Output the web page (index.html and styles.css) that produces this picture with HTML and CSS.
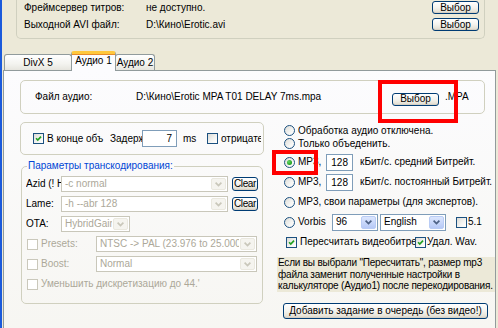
FILE: index.html
```html
<!DOCTYPE html>
<html lang="ru">
<head>
<meta charset="utf-8">
<title>Аудио 1</title>
<link rel="stylesheet" href="styles.css">
</head>
<body>
<div class="window">
  <div class="topgroup">
    <div class="trow"><span class="tlabel">Фреймсервер титров:</span><span class="tval">не доступно.</span><button class="btn btn-choose">Выбор</button></div>
    <div class="trow"><span class="tlabel">Выходной AVI файл:</span><span class="tval">D:\Кино\Erotic.avi</span><button class="btn btn-choose">Выбор</button></div>
  </div>
  <div class="tabs">
    <div class="tab tab-divx">DivX 5</div>
    <div class="tab tab-a1 active">Аудио 1</div>
    <div class="tab tab-a2">Аудио 2</div>
  </div>
  <div class="panel">
    <div class="box filebox">
      <span class="flabel">Файл аудио:</span>
      <span class="fpath">D:\Кино\Erotic MPA T01 DELAY 7ms.mpa</span>
      <button class="btn btn-choose btn-file">Выбор</button>
      <span class="fext">.MPA</span>
    </div>
    <div class="cols">
      <div class="left">
        <div class="box delaybox">
          <span class="cb checked"><svg viewBox="0 0 11 11"><path d="M2.5 5.2 L4.6 7.3 L8.6 3.2" /></svg></span>
          <span class="clip w-end">В конце объ</span>
          <span class="clip w-delay">Задерж</span>
          <span class="input w-ms">7</span>
          <span class="ms">ms</span>
          <span class="cb"></span>
          <span class="clip w-neg">отрицате</span>
        </div>
        <fieldset class="box transcode">
          <legend>Параметры транскодирования:</legend>
          <div class="frow">
            <span class="clip w-flabel">Azid (! H</span>
            <div class="combo disabled w-long"><span class="ctext">-c normal</span><span class="cbtn"><svg viewBox="0 0 7 5"><path d="M0.6 0.6 L3.5 3.6 L6.4 0.6"/></svg></span></div>
            <button class="btn btn-clear">Clear</button>
          </div>
          <div class="frow">
            <span class="clip w-flabel">Lame:</span>
            <div class="combo disabled w-long"><span class="ctext">-h --abr 128</span><span class="cbtn"><svg viewBox="0 0 7 5"><path d="M0.6 0.6 L3.5 3.6 L6.4 0.6"/></svg></span></div>
            <button class="btn btn-clear">Clear</button>
          </div>
          <div class="frow">
            <span class="clip w-flabel">OTA:</span>
            <div class="combo disabled w-ota"><span class="ctext">HybridGain</span><span class="cbtn"><svg viewBox="0 0 7 5"><path d="M0.6 0.6 L3.5 3.6 L6.4 0.6"/></svg></span></div>
          </div>
          <div class="frow">
            <span class="cb disabled cb-f"></span>
            <span class="dis w-plabel">Presets:</span>
            <div class="combo disabled w-preset"><span class="ctext">NTSC -&gt; PAL (23.976 to 25.000)</span><span class="cbtn"><svg viewBox="0 0 7 5"><path d="M0.6 0.6 L3.5 3.6 L6.4 0.6"/></svg></span></div>
          </div>
          <div class="frow">
            <span class="cb disabled cb-f"></span>
            <span class="dis w-plabel">Boost:</span>
            <div class="combo disabled w-preset"><span class="ctext">Normal</span><span class="cbtn"><svg viewBox="0 0 7 5"><path d="M0.6 0.6 L3.5 3.6 L6.4 0.6"/></svg></span></div>
          </div>
          <div class="frow frow-last">
            <span class="cb disabled cb-f"></span>
            <span class="dis">Уменьшить дискретизацию до 44.'</span>
          </div>
        </fieldset>
      </div>
      <div class="right">
        <div class="rrow rrow-s"><span class="rb"></span><span class="rtext">Обработка аудио отключена.</span></div>
        <div class="rrow rrow-s"><span class="rb"></span><span class="rtext">Только объеденить.</span></div>
        <div class="rrow rrow-first"><span class="rb on"></span><span class="rtext w-mp3">MP3,</span><span class="input w-kb">128</span><span class="rdesc">кБит/с. средний Битрейт.</span></div>
        <div class="rrow"><span class="rb"></span><span class="rtext w-mp3">MP3,</span><span class="input w-kb">128</span><span class="rdesc">кБит/с. постоянный Битрейт.</span></div>
        <div class="rrow"><span class="rb"></span><span class="rtext">MP3, свои параметры (для экспертов).</span></div>
        <div class="rrow">
          <span class="rb"></span><span class="rtext w-vorbis">Vorbis</span>
          <div class="combo w-96"><span class="ctext">96</span><span class="cbtn"><svg viewBox="0 0 7 5"><path d="M0.6 0.6 L3.5 3.6 L6.4 0.6"/></svg></span></div>
          <div class="combo w-lang"><span class="ctext">English</span><span class="cbtn"><svg viewBox="0 0 7 5"><path d="M0.6 0.6 L3.5 3.6 L6.4 0.6"/></svg></span></div>
          <span class="cb cb-51"></span><span class="t51">5.1</span>
        </div>
        <div class="rrow">
          <span class="cb checked cb-re"><svg viewBox="0 0 11 11"><path d="M2.5 5.2 L4.6 7.3 L8.6 3.2" /></svg></span>
          <span class="clip w-recalc">Пересчитать видеобитрей</span>
          <span class="cb checked"><svg viewBox="0 0 11 11"><path d="M2.5 5.2 L4.6 7.3 L8.6 3.2" /></svg></span>
          <span class="twav">Удал. Wav.</span>
        </div>
        <div class="note">Если вы выбрали "Пересчитать", размер mp3<br>файла заменит полученные настройки в<br>калькуляторе (Аудио1) после перекодирования.</div>
        <button class="btn btn-queue">Добавить задание в очередь (без видео!)</button>
      </div>
    </div>
  </div>
  <div class="mark mark1"></div>
  <div class="mark mark2"></div>
</div>
</body>
</html>
```

FILE: styles.css
```css
* { box-sizing: border-box; }
html, body { margin: 0; padding: 0; }
body { background: #ECE9D8; }

.window {
  position: relative;
  width: 498px;
  height: 328px;
  overflow: hidden;
  background: #ECE9D8;
  border-left: 2px solid #1B5ADB;
  font-family: "Liberation Sans", Arial, sans-serif;
  font-size: 10px;
  color: #000;
  line-height: 12px;
}

/* buttons */
.btn {
  font-family: inherit;
  font-size: 10px;
  line-height: 10px;
  color: #000;
  padding: 0;
  border: 1px solid #003C74;
  border-radius: 3px;
  background: linear-gradient(#FFFFFF 0%, #F4F3EE 50%, #E6E3D8 85%, #D6D0C5 100%);
  box-shadow: inset 0 -1px 0 #D6D0C5;
  text-align: center;
  flex: none;
  white-space: nowrap;
}
.btn-choose { width: 47px; height: 13px; margin-left: auto; }

/* top group */
.topgroup {
  margin-left: 14px;
  width: 469px;
  height: 39px;
  border: 1px solid #D0D0BF;
  border-top: 0;
  border-radius: 0 0 5px 5px;
  padding: 1px 5px 0 7px;
  display: flex;
  flex-direction: column;
  gap: 4px;
}
.trow { display: flex; align-items: center; height: 13px; }
.tlabel { width: 122px; flex: none; }
.tval { flex: none; }

/* tabs */
.tabs {
  display: flex;
  align-items: flex-end;
  height: 31px;
  margin-left: 2px;
  position: relative;
  z-index: 2;
}
.tab {
  height: 16px;
  border: 1px solid #919B9C;
  border-bottom: 0;
  border-radius: 3px 3px 0 0;
  background: linear-gradient(#FFFFFF, #F3F3EF 60%, #E6E5DE);
  text-align: center;
  line-height: 15px;
  flex: none;
}
.tab-divx { width: 68px; }
.tab-a1 { width: 45px; }
.tab-a2 { width: 40px; margin-left: -1px; }
.tab.active {
  height: 20px;
  margin-bottom: -1px;
  margin-left: -1px;
  background: #FCFCFE;
  border-top: 3px solid #FFC83C;
  box-shadow: inset 0 1px 0 #E68B2C;
  line-height: 13px;
  position: relative;
  z-index: 3;
}

/* panel */
.panel {
  margin-left: 1px;
  width: 493px;
  height: 300px;
  border: 1px solid #919B9C;
  background: linear-gradient(#FCFCFE, #F6F5F0);
  position: relative;
  z-index: 1;
}
.box {
  border: 1px solid #D0D0BF;
  border-radius: 5px;
}
.filebox {
  margin: 9px 0 0 16px;
  width: 465px;
  height: 34px;
  display: flex;
  align-items: center;
  padding-left: 14px;
}
.flabel { width: 101px; flex: none; }
.fpath { width: 256px; flex: none; white-space: nowrap; }
.btn-file { margin-left: 0; margin-top: 4px; }
.fext { margin-left: 6px; }

.cols { display: flex; margin: 8px 0 0 16px; }
.left { width: 244px; flex: none; }
.right { margin-left: 13px; width: 218px; flex: none; padding-top: 2px; }

.clip { white-space: nowrap; overflow: hidden; flex: none; }

/* delay box */
.delaybox {
  height: 33px;
  display: flex;
  align-items: center;
  padding-left: 12px;
  overflow: hidden;
}
.w-end { width: 60px; margin-left: 3px; }
.w-delay { width: 32px; margin-left: 3px; }
.w-ms { width: 35px; height: 17px; }
.ms { width: 24px; margin-left: 6px; flex: none; }
.w-neg { width: 40px; margin-left: 3px; }

.input {
  border: 1px solid #7F9DB9;
  background: #fff;
  text-align: right;
  padding-right: 4px;
  line-height: 15px;
  flex: none;
}

/* checkbox */
.cb {
  width: 11px;
  height: 11px;
  flex: none;
  border: 1px solid #1C5180;
  background: linear-gradient(135deg, #DCDCD7 0%, #F5F5F3 60%, #FFFFFF 100%);
  display: inline-flex;
}
.cb svg { width: 9px; height: 9px; }
.cb svg path { fill: none; stroke: #21A121; stroke-width: 2; }
.cb.disabled { border-color: #CAC8BB; background: #FFFFFF; }

/* transcode group */
.transcode {
  margin: 5px 0 0 1px;
  width: 242px;
  height: 144px;
  padding: 0 0 0 4px;
  min-width: 0;
}
.transcode legend {
  color: #0046D5;
  padding: 0 1px;
  margin-left: 1px;
  line-height: 12px;
}
.frow { display: flex; align-items: center; height: 16px; margin-top: 4px; }
.frow-last { margin-top: 6px; height: 12px; }
.w-flabel { width: 35px; color: #000; }
.btn-clear { width: 26px; height: 14px; margin-left: 4px; letter-spacing: -0.4px; overflow: visible; }
.cb-f { margin-left: 1px; }
.dis { color: #ACA899; white-space: nowrap; margin-left: 3px; }
.w-plabel { width: 55px; flex: none; }

/* combo */
.combo {
  height: 16px;
  border: 1px solid #7F9DB9;
  background: #fff;
  display: flex;
  align-items: stretch;
  flex: none;
  overflow: hidden;
}
.ctext { flex: 1; padding-left: 3px; line-height: 14px; white-space: nowrap; overflow: hidden; }
.cbtn {
  width: 15px;
  margin: 1px;
  border-radius: 2px;
  background: linear-gradient(#DCE6FD, #B6C9F7);
  border: 1px solid #B9CCF5;
  display: flex;
  align-items: center;
  justify-content: center;
  color: #4D6185;
  flex: none;
}
.cbtn svg { width: 7px; height: 5px; }
.cbtn svg path { fill: none; stroke: currentColor; stroke-width: 1.7; }
.combo.disabled { border-color: #C9C7BA; }
.combo.disabled .ctext { color: #ACA899; }
.combo.disabled .cbtn { background: #F5F4EF; border-color: #EAE8DF; color: #C9C7BA; }
.w-long { width: 167px; }
.w-ota { width: 69px; }
.w-preset { width: 161px; }
.w-96 { width: 46px; height: 17px; }
.w-lang { width: 66px; height: 17px; margin-left: 2px; }

/* right column */
.rrow { display: flex; align-items: center; height: 20px; padding-left: 7px; }
.rrow-s { height: 13px; }
.rrow-first { margin-top: 2px; }
.rb {
  width: 11px;
  height: 11px;
  border-radius: 50%;
  border: 1px solid #1C5180;
  background: linear-gradient(135deg, #DCDCD7 0%, #F5F5F3 60%, #FFFFFF 100%);
  flex: none;
  display: flex;
  align-items: center;
  justify-content: center;
}
.rb.on::after {
  content: "";
  width: 5px;
  height: 5px;
  border-radius: 50%;
  background: radial-gradient(circle at 35% 35%, #62D862, #21A121 70%);
}
.rtext { margin-left: 3px; white-space: nowrap; flex: none; }
.w-mp3 { width: 28px; }
.w-kb { width: 27px; height: 17px; }
.rdesc { margin-left: 7px; white-space: nowrap; }
.w-vorbis { width: 34px; }
.cb-51 { margin-left: 10px; }
.t51 { margin-left: 1px; }
.cb-re { margin-left: 2px; }
.w-recalc { width: 115px; margin-left: 3px; }
.twav { margin-left: 1px; white-space: nowrap; }

.note {
  margin-top: 5px;
  background: #ECE9D8;
  line-height: 11.5px;
  padding-left: 1px;
  white-space: nowrap;
  width: 218px;
  letter-spacing: -0.2px;
}
.btn-queue { width: 205px; height: 16px; margin: 11px 0 0 6px; display: block; }

/* red annotation marks */
.mark { position: absolute; border: 4px solid #FF0000; z-index: 5; }
.mark1 { left: 376px; top: 80px; width: 80px; height: 43px; }
.mark2 { left: 270px; top: 150px; width: 46px; height: 25px; }
```
